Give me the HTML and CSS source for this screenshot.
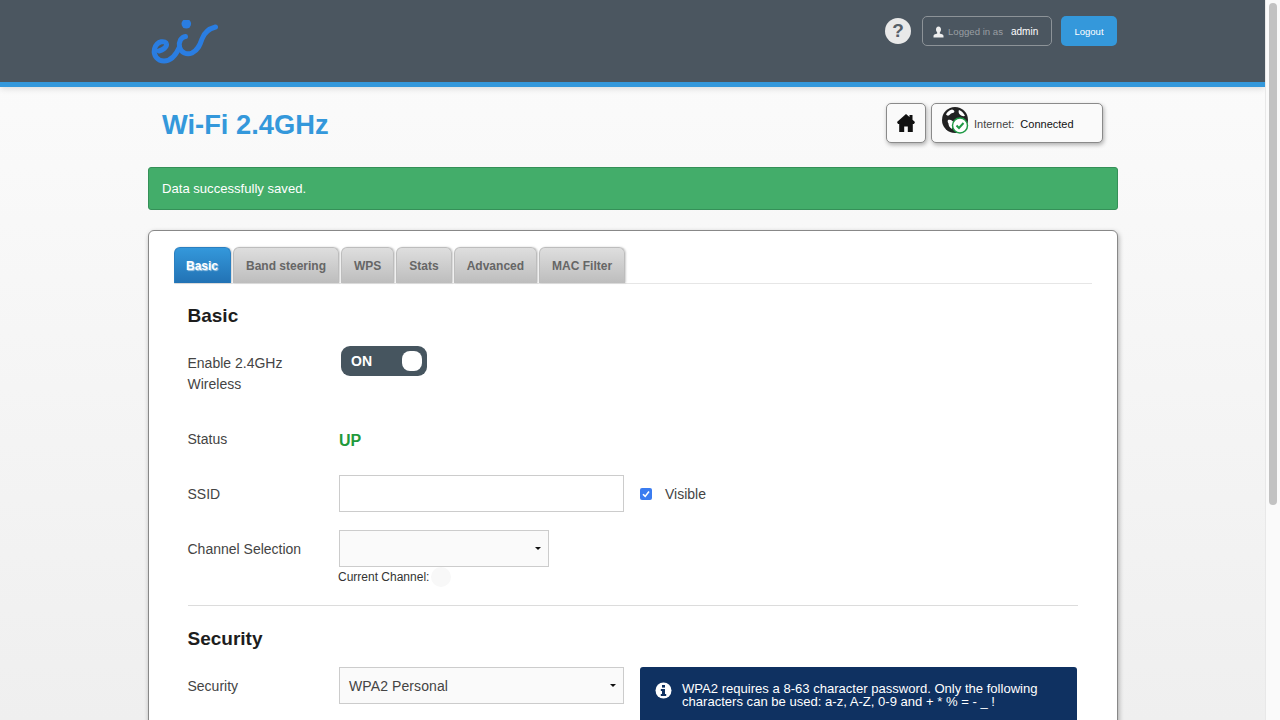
FILE: index.html
```html
<!DOCTYPE html>
<html lang="en">
<head>
<meta charset="utf-8">
<title>Wi-Fi 2.4GHz</title>
<link rel="stylesheet" href="styles.css">
</head>
<body>
<div class="page">
  <header class="topbar">
    <div class="topbar-inner">
      <svg class="logo" width="70" height="46" viewBox="0 0 70 46" fill="none">
        <circle cx="36.300" cy="3.800" r="4.800" fill="#2a7de1"/>
        <path d="M9 31C13 30 17 27 16.500 24C16 20.500 7 20 4.500 29C3 36 8 41 14 41C21 41 26 35 29.500 27" stroke="#2a7de1" stroke-width="5" stroke-linecap="round" stroke-linejoin="round"/>
        <path d="M35.500 16.500C31 17 28.500 22 29.500 27C31 33 37 35 42 33C48 30 50 25 52 19C54 13 58 9 65.500 7" stroke="#2a7de1" stroke-width="5" stroke-linecap="round" stroke-linejoin="round"/>
      </svg>
      <div class="user-tools">
        <span class="help">?</span>
        <div class="login-box">
          <svg class="user-icon" width="11" height="12" viewBox="0 0 11 12"><path d="M5.500 0.500C7.200 0.500 8 1.900 8 3.500C8 4.800 7.400 5.800 6.800 6.400V7.400C8.300 7.900 10.500 8.400 10.500 9.800V11.500H0.500V9.800C0.500 8.400 2.700 7.900 4.200 7.400V6.400C3.600 5.800 3 4.800 3 3.500C3 1.900 3.800 0.500 5.500 0.500Z" fill="#eee"/></svg>
          <span class="login-label">Logged in as</span>
          <span class="login-name">admin</span>
        </div>
        <a class="logout">Logout</a>
      </div>
    </div>
  </header>

  <main class="content">
    <div class="title-row">
      <h1 class="page-title">Wi-Fi 2.4GHz</h1>
      <div class="status-tools">
        <a class="home-btn">
          <svg width="18" height="18" viewBox="0 0 18 18"><path d="M9 0L12.500 3V1H15.500V5.700L18 8L17 10H15.800V18H10.800V12.500H7.200V18H2.200V10H1L0 8Z" fill="#111"/></svg>
        </a>
        <div class="internet-box">
          <svg class="globe" width="28" height="28" viewBox="0 0 28 28">
            <circle cx="13" cy="13" r="13" fill="#222"/>
            <path d="M10 2.500C12 3 13 4 12 5.500C10 6.500 9 6 8 7.500C7 9 5 9 4 7.500C5 5 7 3.500 10 2.500ZM17 3C20 4 22 6.500 23 9C21 9.500 18 8.500 17 6.500C16.500 5 16.500 4 17 3ZM6 13C8.500 12 11 13.500 12 16C12 18 10.500 19.500 10 22C7.500 20.500 6.500 18.500 6.500 16.500C5.500 15 5.500 14 6 13Z" fill="#fff"/>
            <circle cx="18" cy="18.500" r="7.500" fill="#fff" stroke="#1f9a45" stroke-width="1.500"/>
            <path d="M14.500 18.500L17 21L21.500 16" fill="none" stroke="#1f9a45" stroke-width="2"/>
          </svg>
          <span class="internet-label">Internet:</span>
          <span class="internet-value">Connected</span>
        </div>
      </div>
    </div>

    <div class="alert">Data successfully saved.</div>

    <section class="card">
      <nav class="tabs">
        <a class="tab tab-active">Basic</a>
        <a class="tab">Band steering</a>
        <a class="tab">WPS</a>
        <a class="tab">Stats</a>
        <a class="tab">Advanced</a>
        <a class="tab">MAC Filter</a>
      </nav>

      <div class="panel">
        <h2 class="section-title">Basic</h2>

        <div class="row row-toggle">
          <label class="row-label">Enable 2.4GHz Wireless</label>
          <div class="toggle"><span class="toggle-text">ON</span><span class="toggle-knob"></span></div>
        </div>

        <div class="row row-status">
          <label class="row-label">Status</label>
          <span class="status-up">UP</span>
        </div>

        <div class="row row-ssid">
          <label class="row-label">SSID</label>
          <input class="text-input" type="text">
          <span class="checkbox"><svg width="8" height="8" viewBox="0 0 8 8"><path d="M1 4.200L3.200 6.400L7 1.600" fill="none" stroke="#fff" stroke-width="1.600"/></svg></span>
          <span class="visible-label">Visible</span>
        </div>

        <div class="row row-channel">
          <label class="row-label">Channel Selection</label>
          <div class="select select-short"><span class="select-value"></span><span class="caret"></span></div>
        </div>
        <div class="channel-note">
          <span>Current Channel:</span><span class="channel-dot"></span>
        </div>

        <hr class="divider">

        <h2 class="section-title section-security">Security</h2>

        <div class="row row-security">
          <label class="row-label">Security</label>
          <div class="select select-long"><span class="select-value">WPA2 Personal</span><span class="caret"></span></div>
          <div class="info-box">
            <svg class="info-icon" width="17" height="17" viewBox="0 0 17 17"><circle cx="8.500" cy="8.500" r="8" fill="#fff"/><rect x="7" y="3" width="3" height="2.600" fill="#0f3161"/><path d="M5.800 7H10V12H11.200V14H5.800V12H7V9H5.800Z" fill="#0f3161"/></svg>
            <p class="info-text">WPA2 requires a 8-63 character password. Only the following characters can be used: a-z, A-Z, 0-9 and + * % = - _ !</p>
          </div>
        </div>
      </div>
    </section>
  </main>
</div>
<div class="scrollbar"><span class="scroll-thumb"></span></div>
</body>
</html>
```
FILE: styles.css
```css
* { box-sizing: border-box; }
html, body { margin: 0; height: 100%; overflow: hidden; }
body {
  display: flex;
  font-family: "Liberation Sans", Arial, sans-serif;
  color: #444;
  background: #fff;
}
.page {
  flex: 1;
  min-width: 0;
  height: 720px;
  overflow: hidden;
  background: linear-gradient(#fcfcfc, #efefef);
}
.scrollbar {
  width: 15px;
  height: 720px;
  flex: none;
  background: #fafafa;
  border-left: 1px solid #e8e8e8;
  padding: 3px 3px 0 3px;
}
.scroll-thumb {
  display: block;
  width: 8px;
  height: 502px;
  border-radius: 4px;
  background: #c2c2c2;
}
.topbar {
  height: 87px;
  background: #4b5660;
  border-bottom: 5px solid #3498db;
  box-shadow: 0 2px 6px rgba(0, 0, 0, .12);
}
.topbar-inner {
  width: 970px;
  margin-left: 148px;
  display: flex;
  justify-content: space-between;
  padding: 16px 1px 0 0;
}
.logo { margin: 4px 0 0 2px; flex: none; }
.user-tools { display: flex; align-items: center; height: 30px; }
.help {
  width: 26px;
  height: 26px;
  border-radius: 50%;
  background: #e9e9e9;
  color: #566069;
  font-weight: 700;
  font-size: 19px;
  line-height: 26px;
  text-align: center;
  margin-right: 11px;
}
.login-box {
  width: 130px;
  height: 30px;
  border: 1px solid #8d9398;
  border-radius: 5px;
  display: flex;
  align-items: center;
  padding-left: 10px;
  font-size: 9.600px;
  margin-right: 9px;
}
.user-icon { margin: 2px 4px 0 0; }
.login-label { color: #9a9fa3; margin-right: 8px; }
.login-name { color: #fff; font-size: 10px; }
.logout {
  width: 56px;
  height: 30px;
  line-height: 31px;
  border-radius: 5px;
  background: #3498db;
  color: #fff;
  font-size: 9.500px;
  text-align: center;
}
.content { width: 970px; margin-left: 148px; }
.title-row {
  display: flex;
  justify-content: space-between;
  padding: 16px 15px 0 14px;
  height: 80px;
}
.page-title {
  margin: 0;
  color: #3498db;
  font-size: 27.300px;
  line-height: 44px;
  font-weight: 700;
}
.status-tools { display: flex; gap: 5px; }
.home-btn, .internet-box {
  height: 40px;
  background: #fafafa;
  border: 1px solid #8a8a8a;
  border-radius: 5px;
  box-shadow: 1px 2px 4px rgba(0, 0, 0, .3);
}
.home-btn {
  width: 40px;
  display: flex;
  align-items: center;
  justify-content: center;
}
.internet-box {
  width: 172px;
  display: flex;
  align-items: center;
  padding-left: 10px;
  font-size: 11px;
}
.globe { margin: -4px 4px 0 0; flex: none; }
.internet-label { color: #444; margin: 2px 6px 0 0; }
.internet-value { color: #111; margin-top: 2px; }
.alert {
  height: 43px;
  background: #43ad6a;
  border: 1px solid #359058;
  border-radius: 3px;
  color: #fff;
  font-size: 13.100px;
  line-height: 41px;
  padding-left: 13px;
}
.card {
  margin-top: 20px;
  height: 520px;
  background: #fff;
  border: 1px solid #888;
  border-radius: 6px;
  box-shadow: 1px 2px 5px rgba(0, 0, 0, .3);
  padding: 16px 25px 0;
}
.tabs {
  display: flex;
  gap: 2px;
  height: 37px;
  border-bottom: 1px solid #e6e6e6;
}
.tab {
  height: 36px;
  padding: 0 12px;
  border: 1px solid #bdbdbd;
  border-bottom: 0;
  border-radius: 6px 6px 0 0;
  background: linear-gradient(#dedede, #bdbdbd);
  color: #666;
  font-size: 12px;
  font-weight: 700;
  line-height: 36px;
  box-shadow: 1px 0 2px rgba(0, 0, 0, .2);
}
.tab-active {
  width: 57px;
  padding: 0 11px;
  border-color: #2a7fc0;
  background: linear-gradient(#3498db, #2272b4);
  color: #fff;
  text-shadow: 1px 1px 1px rgba(255, 255, 255, .6);
}
.panel { padding: 0 14px 0 13.500px; }
.section-title {
  margin: 0;
  color: #1d1d1d;
  font-size: 19px;
  line-height: 24px;
  padding-top: 20px;
  font-weight: 700;
}
.row { display: flex; align-items: flex-start; }
.row-label {
  width: 151.500px;
  flex: none;
  font-size: 14px;
  line-height: 21px;
  padding-right: 20px;
}
.row-toggle { margin-top: 18px; height: 73px; }
.row-toggle .row-label { padding-top: 7px; }
.toggle {
  margin-left: 2px;
  width: 86px;
  height: 30px;
  border-radius: 9px;
  background: #46555f;
  display: flex;
  align-items: center;
  justify-content: space-between;
  padding: 0 5px 0 10px;
}
.toggle-text { color: #fff; font-size: 14px; font-weight: 700; }
.toggle-knob { width: 20px; height: 20px; border-radius: 8px; background: #fff; }
.row-status { margin-top: 10px; height: 29px; }
.status-up { color: #1f9a3c; font-size: 16px; font-weight: 700; line-height: 23px; }
.row-ssid { margin-top: 17px; height: 37px; align-items: center; }
.row-ssid .row-label, .row-channel .row-label { padding-top: 2px; }
.text-input {
  width: 285px;
  height: 37px;
  border: 1px solid #ccc;
  background: #fff;
  margin: 0;
  padding: 0;
  outline: 0;
}
.checkbox {
  width: 12px;
  height: 12px;
  margin: 1px 13px 0 16px;
  border-radius: 2px;
  background: #3b7cf0;
  display: flex;
  align-items: center;
  justify-content: center;
}
.visible-label { font-size: 14px; }
.row-channel { margin-top: 18px; height: 37px; align-items: center; }
.select {
  height: 37px;
  border: 1px solid #ccc;
  background: #fafafa;
  display: flex;
  align-items: center;
  justify-content: space-between;
  padding: 0 7px 0 9px;
  font-size: 14px;
  letter-spacing: .1px;
}
.select-short { width: 210px; }
.select-long { width: 285px; flex: none; }
.caret {
  width: 0;
  height: 0;
  border: 3px solid transparent;
  border-top-color: #111;
  border-bottom: 0;
}
.channel-note {
  display: flex;
  align-items: center;
  margin: 0 0 0 150.500px;
  height: 20px;
  font-size: 12px;
  color: #333;
}
.channel-dot {
  width: 20px;
  height: 20px;
  border-radius: 50%;
  background: #f8f8f8;
  margin-left: 2px;
}
.divider {
  margin: 18px 0 0;
  border: 0;
  border-top: 1px solid #dcdcdc;
}
.section-security { padding-top: 21px; }
.row-security { margin-top: 16px; }
.row-security .row-label { padding-top: 9px; }
.info-box {
  width: 437px;
  height: 80px;
  flex: none;
  margin: 0 0 0 16px;
  background: #0f3161;
  border-radius: 3px;
  color: #fff;
  display: flex;
  align-items: flex-start;
  padding: 15px 20px 0 15px;
}
.info-icon { flex: none; margin-right: 10px; }
.info-text { margin: 0; font-size: 13.070px; line-height: 13px; }
```
